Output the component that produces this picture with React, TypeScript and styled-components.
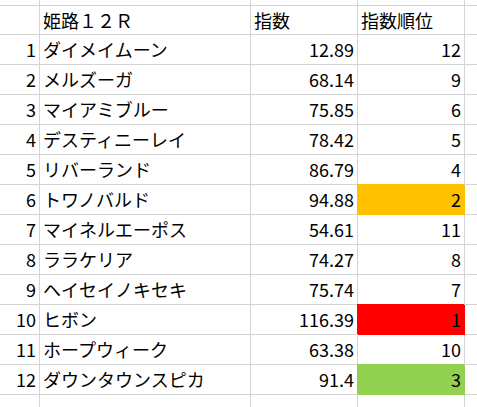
import React from "react";
import styled, { createGlobalStyle } from "styled-components";

const Global = createGlobalStyle`
  html, body { margin: 0; padding: 0; background: #ffffff; }
  body { font-family: "Noto Sans CJK JP", "Noto Sans", sans-serif; color: #000; }
`;

const GRID = "#d4d4d4";

const Sheet = styled.div`
  display: grid;
  grid-template-columns: 40px 211px 107px 107px 1fr;
  grid-template-rows: 6px 29px repeat(12, 30px) 1fr;
  width: 477px;
  height: 407px;
  overflow: hidden;
`;

const Cell = styled.div<{ $align?: "left" | "right"; $fill?: string; $last?: boolean }>`
  box-sizing: border-box;
  border-right: ${(p) => (p.$last ? "none" : `1px solid ${p.$fill ?? GRID}`)};
  border-bottom: 1px solid ${(p) => p.$fill ?? GRID};
  background: ${(p) => p.$fill ?? "transparent"};
  box-shadow: ${(p) => (p.$fill ? `-1px -1px 0 0 ${p.$fill}` : "none")};
  font-size: 18px;
  line-height: 29px;
  white-space: nowrap;
  text-align: ${(p) => (p.$align === "right" ? "right" : "left")};
  padding: 0 ${(p) => (p.$align === "right" ? "3px" : "0")} 0 ${(p) => (p.$align === "right" ? "0" : "3px")};
`;

const HeaderCell = styled(Cell)`
  line-height: 28px;
`;

const EdgeCell = styled.div<{ $last?: boolean; $bottom?: boolean }>`
  box-sizing: border-box;
  border-right: ${(p) => (p.$last ? "none" : `1px solid ${GRID}`)};
  border-bottom: ${(p) => (p.$bottom ? "none" : `1px solid ${GRID}`)};
`;

type Row = { name: string; idx: string; rank: string; fill?: string };

const rows: Row[] = [
  { name: "ダイメイムーン", idx: "12.89", rank: "12" },
  { name: "メルズーガ", idx: "68.14", rank: "9" },
  { name: "マイアミブルー", idx: "75.85", rank: "6" },
  { name: "デスティニーレイ", idx: "78.42", rank: "5" },
  { name: "リバーランド", idx: "86.79", rank: "4" },
  { name: "トワノバルド", idx: "94.88", rank: "2", fill: "#ffc000" },
  { name: "マイネルエーポス", idx: "54.61", rank: "11" },
  { name: "ララケリア", idx: "74.27", rank: "8" },
  { name: "ヘイセイノキセキ", idx: "75.74", rank: "7" },
  { name: "ヒボン", idx: "116.39", rank: "1", fill: "#ff0000" },
  { name: "ホープウィーク", idx: "63.38", rank: "10" },
  { name: "ダウンタウンスピカ", idx: "91.4", rank: "3", fill: "#92d050" },
];

export default function App() {
  return (
    <>
      <Global />
      <Sheet>
        <EdgeCell />
        <EdgeCell />
        <EdgeCell />
        <EdgeCell />
        <EdgeCell $last />

        <HeaderCell />
        <HeaderCell>姫路１２Ｒ</HeaderCell>
        <HeaderCell>指数</HeaderCell>
        <HeaderCell>指数順位</HeaderCell>
        <HeaderCell $last />

        {rows.map((r, i) => (
          <React.Fragment key={i}>
            <Cell $align="right">{i + 1}</Cell>
            <Cell>{r.name}</Cell>
            <Cell $align="right">{r.idx}</Cell>
            <Cell $align="right" $fill={r.fill}>{r.rank}</Cell>
            <Cell $last />
          </React.Fragment>
        ))}

        <EdgeCell $bottom />
        <EdgeCell $bottom />
        <EdgeCell $bottom />
        <EdgeCell $bottom />
        <EdgeCell $bottom $last />
      </Sheet>
    </>
  );
}
